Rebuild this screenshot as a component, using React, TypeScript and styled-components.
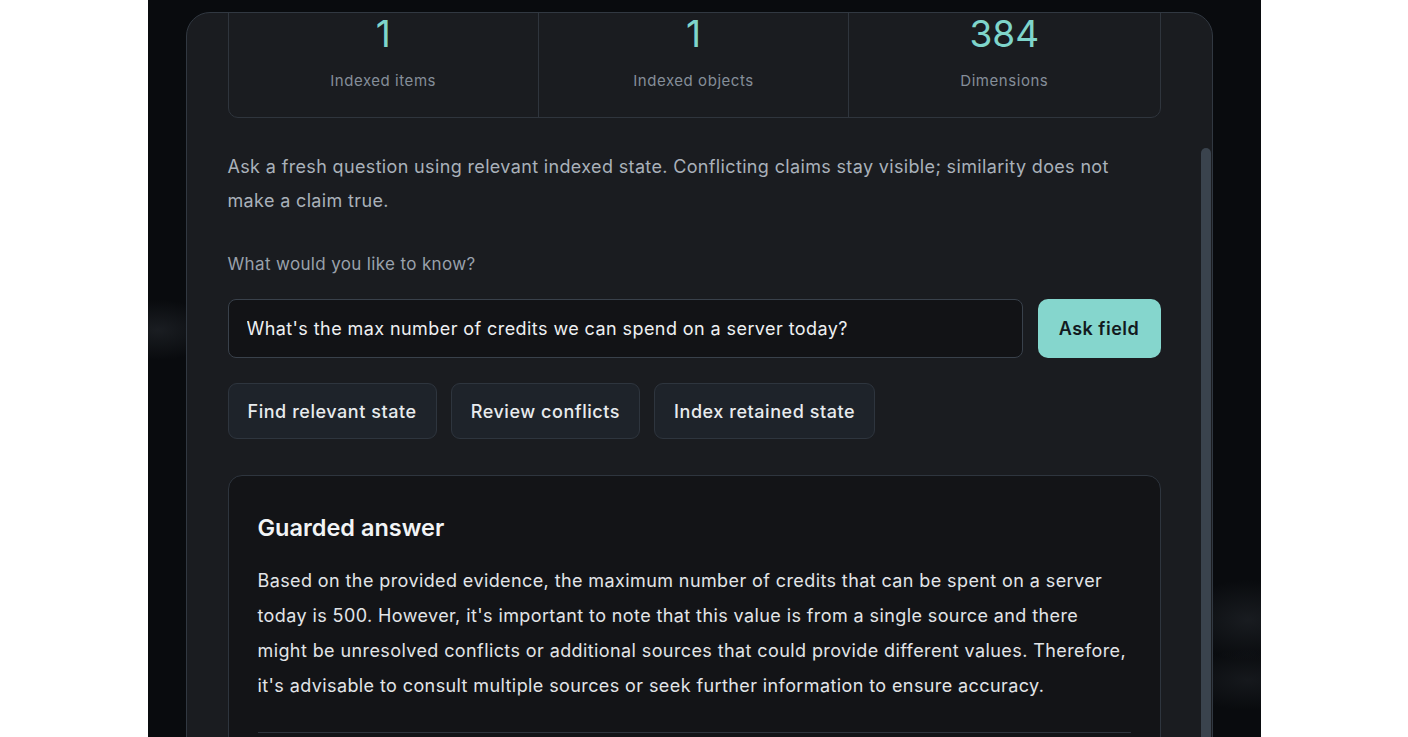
import React, { useLayoutEffect, useRef } from "react";
import styled, { createGlobalStyle } from "styled-components";

const Global = createGlobalStyle`
  html, body { margin: 0; padding: 0; background: #ffffff; height: 100%; overflow: hidden; }
  #root { height: 100%; }
  * { box-sizing: border-box; }
`;

const Page = styled.div`
  height: 737px;
  display: flex;
  justify-content: center;
  background: #ffffff;
  font-family: Inter, "Noto Sans", sans-serif;
`;

const Backdrop = styled.div`
  width: 1113px;
  height: 100%;
  background:
    radial-gradient(ellipse 60px 30px at 10px 330px, rgba(40, 44, 50, 0.55), transparent),
    radial-gradient(ellipse 70px 40px at 1100px 620px, rgba(40, 44, 50, 0.5), transparent),
    radial-gradient(ellipse 70px 30px at 1100px 680px, rgba(40, 44, 50, 0.4), transparent),
    #090b0e;
  padding: 12px 48px 0 38px;
  overflow: hidden;
`;

const Modal = styled.div`
  position: relative;
  height: 900px;
  background: #1a1c20;
  border: 1px solid #313841;
  border-radius: 24px;
  overflow: hidden;
`;

const Scroller = styled.div`
  height: 100%;
  overflow-y: auto;
  scrollbar-width: none;
  padding: 40px 51px 240px 41px;
  &::-webkit-scrollbar { display: none; }
`;

const ScrollThumb = styled.div`
  position: absolute;
  top: 135px;
  right: 1px;
  width: 10px;
  height: 900px;
  border-radius: 5px;
  background: #3a434d;
`;

const StatGrid = styled.div`
  display: grid;
  grid-template-columns: repeat(3, 1fr);
  border: 1px solid #2f353d;
  border-radius: 10px;
  background: #1a1c20;
`;

const StatCell = styled.div<{ $last?: boolean }>`
  display: flex;
  flex-direction: column;
  align-items: center;
  padding: 26px 16px 25px;
  border-right: ${(p) => (p.$last ? "none" : "1px solid #2f353d")};
`;

const StatValue = styled.div`
  font-size: 37px;
  line-height: 44px;
  color: #7fd5cb;
  font-weight: 400;
`;

const StatLabel = styled.div`
  margin-top: 14px;
  font-size: 15px;
  line-height: 22px;
  color: #858e99;
  letter-spacing: 0.55px;
`;

const Intro = styled.p`
  margin: 32px 0 0;
  max-width: 905px;
  font-size: 18px;
  line-height: 34px;
  color: #a9b1ba;
  letter-spacing: 0.35px;
`;

const FieldLabel = styled.div`
  margin-top: 34px;
  font-size: 17px;
  line-height: 24px;
  color: #99a1ab;
  letter-spacing: 0.35px;
`;

const AskRow = styled.div`
  display: flex;
  gap: 15px;
  margin-top: 23px;
`;

const QuestionInput = styled.input`
  flex: 1;
  height: 59px;
  padding: 0 18px;
  background: #121316;
  border: 1px solid #39414b;
  border-radius: 8px;
  color: #eef0f2;
  font-family: Inter, "Noto Sans", sans-serif;
  font-size: 18px;
  outline: none;
  letter-spacing: 0.42px;
`;

const PrimaryButton = styled.button`
  width: 123px;
  height: 59px;
  border: none;
  border-radius: 10px;
  background: #85d6cd;
  color: #131a1e;
  font-family: Inter, "Noto Sans", sans-serif;
  font-size: 18px;
  font-weight: 600;
  letter-spacing: 0.5px;
  cursor: pointer;
`;

const ChipRow = styled.div`
  display: flex;
  gap: 14px;
  margin-top: 25px;
`;

const Chip = styled.button`
  height: 56px;
  padding: 0 19px;
  background: #1e232a;
  border: 1px solid #2e353e;
  border-radius: 9px;
  color: #e8ebee;
  font-family: Inter, "Noto Sans", sans-serif;
  font-size: 18px;
  font-weight: 500;
  letter-spacing: 0.55px;
  cursor: pointer;
`;

const AnswerCard = styled.section`
  margin-top: 36px;
  background: #131417;
  border: 1px solid #2e353e;
  border-radius: 14px;
  padding: 36px 29px 30px;
`;

const AnswerTitle = styled.h3`
  margin: 0;
  font-size: 23.5px;
  line-height: 32px;
  font-weight: 600;
  color: #f2f4f6;
`;

const AnswerBody = styled.p`
  margin: 19px 0 0;
  font-size: 18px;
  line-height: 35px;
  color: #e2e5e8;
  letter-spacing: 0.4px;
`;

const Divider = styled.hr`
  margin: 29px 0 0;
  border: none;
  border-top: 1px solid #2f353d;
`;

const stats = [
  { value: "1", label: "Indexed items" },
  { value: "1", label: "Indexed objects" },
  { value: "384", label: "Dimensions" },
];

export default function App() {
  const scrollRef = useRef<HTMLDivElement>(null);
  const gridRef = useRef<HTMLDivElement>(null);

  useLayoutEffect(() => {
    const s = scrollRef.current;
    const g = gridRef.current;
    if (s && g) s.scrollTop = g.offsetTop + 28;
  }, []);

  return (
    <>
      <Global />
      <Page>
        <Backdrop>
          <Modal>
            <Scroller ref={scrollRef}>
              <StatGrid ref={gridRef}>
                {stats.map((s, i) => (
                  <StatCell key={s.label} $last={i === stats.length - 1}>
                    <StatValue>{s.value}</StatValue>
                    <StatLabel>{s.label}</StatLabel>
                  </StatCell>
                ))}
              </StatGrid>
              <Intro>
                Ask a fresh question using relevant indexed state. Conflicting claims stay visible;
                similarity does not make a claim true.
              </Intro>
              <FieldLabel>What would you like to know?</FieldLabel>
              <AskRow>
                <QuestionInput
                  defaultValue="What's the max number of credits we can spend on a server today?"
                  aria-label="What would you like to know?"
                />
                <PrimaryButton>Ask field</PrimaryButton>
              </AskRow>
              <ChipRow>
                <Chip>Find relevant state</Chip>
                <Chip>Review conflicts</Chip>
                <Chip>Index retained state</Chip>
              </ChipRow>
              <AnswerCard>
                <AnswerTitle>Guarded answer</AnswerTitle>
                <AnswerBody>
                  Based on the provided evidence, the maximum number of credits that can be spent on a
                  server today is 500. However, it's important to note that this value is from a single
                  source and there might be unresolved conflicts or additional sources that could
                  provide different values. Therefore, it's advisable to consult multiple sources or
                  seek further information to ensure accuracy.
                </AnswerBody>
                <Divider />
              </AnswerCard>
            </Scroller>
            <ScrollThumb />
          </Modal>
        </Backdrop>
      </Page>
    </>
  );
}
